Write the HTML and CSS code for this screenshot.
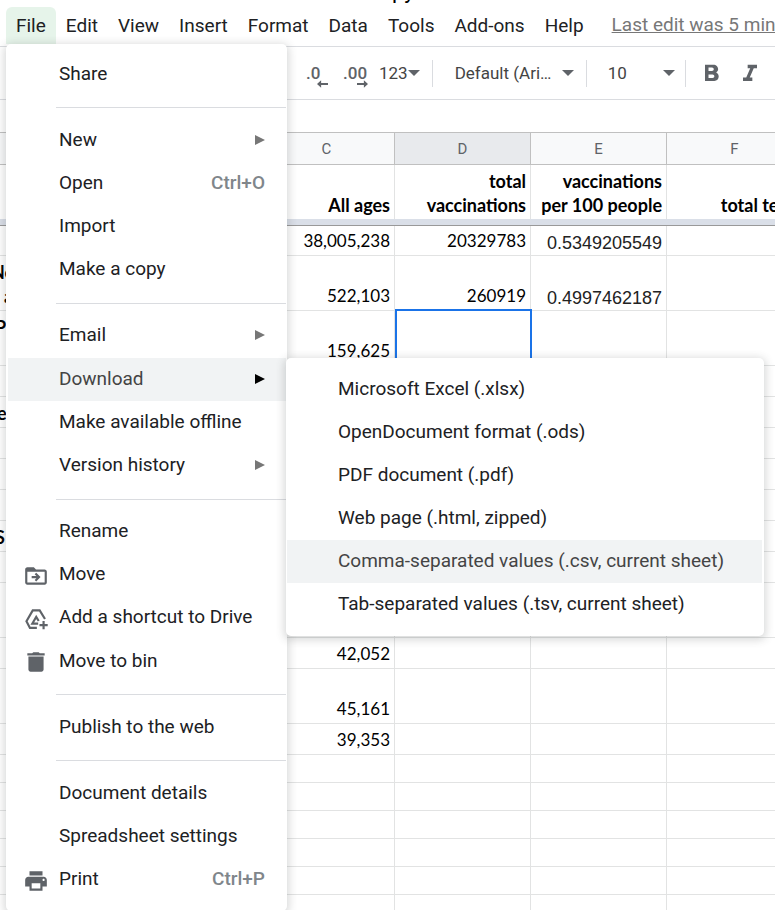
FILE: index.html
```html
<!DOCTYPE html>
<html lang="en">
<head>
<meta charset="utf-8">
<title>Spreadsheet</title>
<link rel="stylesheet" href="styles.css">
</head>
<body>
<header class="title-row"><span class="doc-title">py</span></header>
<nav class="menubar">
  <button class="menu-button open" type="button">File</button>
  <button class="menu-button" type="button">Edit</button>
  <button class="menu-button" type="button">View</button>
  <button class="menu-button" type="button">Insert</button>
  <button class="menu-button" type="button">Format</button>
  <button class="menu-button" type="button">Data</button>
  <button class="menu-button" type="button">Tools</button>
  <button class="menu-button" type="button">Add-ons</button>
  <button class="menu-button" type="button">Help</button>
  <a class="last-edit" href="#">Last edit was 5 min</a>
</nav>
<div class="toolbar">
  <button class="tool decimal" type="button">.0<svg class="arrow" viewBox="0 0 12 8"><path d="M0 4l4.500-4v3H12v2H4.500v3z"/></svg></button>
  <button class="tool decimal wide" type="button">.00<svg class="arrow" viewBox="0 0 12 8"><path d="M12 4L7.500 0v3H0v2h7.500v3z"/></svg></button>
  <button class="tool number" type="button">123<span class="caret"></span></button>
  <span class="divider"></span>
  <label class="picker family"><select aria-label="Font"><option>Default (Ari…</option></select><span class="caret"></span></label>
  <span class="divider"></span>
  <label class="picker size"><select aria-label="Font size"><option>10</option></select><span class="caret"></span></label>
  <span class="divider"></span>
  <button class="tool style" type="button" aria-label="Bold"><svg viewBox="0 0 24 24"><path d="M15.600 10.790c.970-.670 1.650-1.770 1.650-2.790 0-2.260-1.750-4-4-4H6v14h8.040c2.090 0 3.710-1.700 3.710-3.790 0-1.520-.860-2.820-2.150-3.420zM9 6.500h3c.830 0 1.500.670 1.500 1.500s-.670 1.500-1.500 1.500H9v-3zm3.500 9H9v-3h3.500c.830 0 1.500.670 1.500 1.500s-.670 1.500-1.500 1.500z"/></svg></button>
  <button class="tool style" type="button" aria-label="Italic"><svg viewBox="0 0 24 24"><path d="M10 4v3h2.210l-3.420 8H6v3h8v-3h-2.210l3.420-8H18V4z"/></svg></button>
</div>
<main class="sheet">
<table class="grid">
  <colgroup><col class="first"><col><col><col><col></colgroup>
  <thead>
    <tr class="letters"><th></th><th>C</th><th class="active">D</th><th>E</th><th>F</th></tr>
    <tr class="titles"><th></th><th>All ages</th><th>total<br>vaccinations</th><th>vaccinations<br>per 100 people</th><th>total tests</th></tr>
    <tr class="freeze"><td colspan="5"></td></tr>
  </thead>
  <tbody>
    <tr class="r30"><td></td><td>38,005,238</td><td>20329783</td><td class="plain">0.5349205549</td><td></td></tr>
    <tr class="r55"><td class="name wide-name">Ne<br>a</td><td>522,103</td><td>260919</td><td class="plain">0.4997462187</td><td></td></tr>
    <tr class="r55"><td class="name">P<br>&nbsp;</td><td>159,625</td><td class="selected"></td><td></td><td></td></tr>
    <tr class="r31"><td></td><td></td><td></td><td></td><td></td></tr>
    <tr class="r31"><td class="name e-name">e</td><td></td><td></td><td></td><td></td></tr>
    <tr class="r31"><td></td><td></td><td></td><td></td><td></td></tr>
    <tr class="r31"><td></td><td></td><td></td><td></td><td></td></tr>
    <tr class="r31"><td></td><td></td><td></td><td></td><td></td></tr>
    <tr class="r31"><td class="name">S</td><td></td><td></td><td></td><td></td></tr>
    <tr class="r31"><td></td><td></td><td></td><td></td><td></td></tr>
    <tr class="r55"><td></td><td></td><td></td><td></td><td></td></tr>
    <tr class="r31"><td></td><td>42,052</td><td></td><td></td><td></td></tr>
    <tr class="r55"><td></td><td>45,161</td><td></td><td></td><td></td></tr>
    <tr class="r31"><td></td><td>39,353</td><td></td><td></td><td></td></tr>
    <tr class="r28"><td></td><td></td><td></td><td></td><td></td></tr>
    <tr class="r28"><td></td><td></td><td></td><td></td><td></td></tr>
    <tr class="r28"><td></td><td></td><td></td><td></td><td></td></tr>
    <tr class="r28"><td></td><td></td><td></td><td></td><td></td></tr>
    <tr class="r28"><td></td><td></td><td></td><td></td><td></td></tr>
    <tr class="r28"><td></td><td></td><td></td><td></td><td></td></tr>
  </tbody>
</table>
</main>

<ul class="menu file-menu">
  <li class="row"><button class="item" type="button">Share</button></li>
  <li class="separator"></li>
  <li class="row"><button class="item" type="button">New<span class="more"></span></button></li>
  <li class="row"><button class="item" type="button">Open<kbd>Ctrl+O</kbd></button></li>
  <li class="row"><button class="item" type="button">Import</button></li>
  <li class="row"><button class="item" type="button">Make a copy</button></li>
  <li class="separator"></li>
  <li class="row"><button class="item" type="button">Email<span class="more"></span></button></li>
  <li class="row">
    <button class="item current" type="button">Download<span class="more"></span></button>
    <ul class="menu submenu">
      <li><button class="item" type="button">Microsoft Excel (.xlsx)</button></li>
      <li><button class="item" type="button">OpenDocument format (.ods)</button></li>
      <li><button class="item" type="button">PDF document (.pdf)</button></li>
      <li><button class="item" type="button">Web page (.html, zipped)</button></li>
      <li><button class="item current" type="button">Comma-separated values (.csv, current sheet)</button></li>
      <li><button class="item" type="button">Tab-separated values (.tsv, current sheet)</button></li>
    </ul>
  </li>
  <li class="row"><button class="item" type="button">Make available offline</button></li>
  <li class="row"><button class="item" type="button">Version history<span class="more"></span></button></li>
  <li class="separator"></li>
  <li class="row"><button class="item" type="button">Rename</button></li>
  <li class="row"><button class="item" type="button"><svg class="icon" viewBox="0 0 24 24"><path d="M20 6h-8l-2-2H4c-1.100 0-2 .900-2 2v12c0 1.100.900 2 2 2h16c1.100 0 2-.900 2-2V8c0-1.100-.900-2-2-2zm0 12H4V8h16v10z"/><path d="M8 12h4.400l-1.600-1.600L12.200 9l4 4-4 4-1.400-1.400 1.600-1.600H8z"/></svg>Move</button></li>
  <li class="row"><button class="item" type="button"><svg class="icon" viewBox="0 0 24 24"><path class="line" d="M20.300 12L15.400 4H9L3.200 14l3.200 6.200h6.400M14 16.200H8.600L12.200 10l2.300 3.800"/><path class="line" d="M19 13.800v7.600M15.200 17.600h7.600"/></svg>Add a shortcut to Drive</button></li>
  <li class="row"><button class="item" type="button"><svg class="icon" viewBox="0 0 24 24"><path d="M5 19c0 1.100.900 2 2 2h10c1.100 0 2-.900 2-2V7H5v12zM20 4h-4.500l-1-1h-5l-1 1H4v2h16V4z"/></svg>Move to bin</button></li>
  <li class="separator"></li>
  <li class="row"><button class="item" type="button">Publish to the web</button></li>
  <li class="separator"></li>
  <li class="row"><button class="item" type="button">Document details</button></li>
  <li class="row"><button class="item" type="button">Spreadsheet settings</button></li>
  <li class="row"><button class="item" type="button"><svg class="icon" viewBox="0 0 24 24"><path d="M19 8H5c-1.660 0-3 1.340-3 3v6h4v4h12v-4h4v-6c0-1.660-1.340-3-3-3zm-3 11H8v-5h8v5zm3-7c-.550 0-1-.450-1-1s.450-1 1-1 1 .450 1 1-.450 1-1 1zm-1-9H6v4h12V3z"/></svg>Print<kbd>Ctrl+P</kbd></button></li>
</ul>
</body>
</html>
```
FILE: styles.css
```css
* { box-sizing: border-box; }

body {
  position: relative;
  height: 100vh;
  margin: 0;
  overflow: hidden;
  background: #fff;
  color: #202124;
  font: 19px/24px Roboto, sans-serif;
}

button, select {
  margin: 0;
  padding: 0;
  border: 0;
  background: none;
  color: inherit;
  font: inherit;
  text-align: left;
  white-space: nowrap;
}

/* Title and menu bar */
.title-row {
  display: flex;
  align-items: flex-end;
  height: 3px;
  padding-left: 392px;
  overflow: hidden;
}
.doc-title { color: #000; font-size: 22px; line-height: 24px; }

.menubar {
  display: flex;
  align-items: flex-start;
  height: 44px;
  padding: 4px 0 0 6px;
  border-bottom: 1px solid #dadce0;
  white-space: nowrap;
}
.menu-button { flex: none; height: 37px; padding: 0 10px; }
.menu-button.open { border-radius: 6px 6px 0 0; background: #e6f4ea; }
.last-edit { margin-left: 18px; color: #777; line-height: 36px; }

/* Toolbar */
.toolbar {
  display: flex;
  align-items: center;
  height: 53px;
  padding-left: 306px;
  border-bottom: 1px solid #dadce0;
  color: #5f6368;
  font-size: 17px;
}
.tool { flex: none; position: relative; }
.decimal { width: 37px; font-weight: 500; }
.decimal.wide { width: 36px; }
.arrow {
  position: absolute;
  left: 11px;
  bottom: -3px;
  width: 11px;
  height: 8px;
  fill: #5f6368;
}
.wide .arrow { left: 14px; }
.number { display: flex; align-items: center; color: #444; }
.caret {
  border: 6px solid transparent;
  border-top-color: #5f6368;
  border-bottom: 0;
}
.divider { flex: none; width: 1px; height: 27px; background: #dadce0; }
.number + .divider { margin-left: 12px; }
.picker { display: flex; flex: none; align-items: center; color: #444; }
.picker select { flex: 1; min-width: 0; appearance: none; }
.family { width: 153px; padding: 0 12px 0 22px; }
.size { width: 98px; padding: 0 10px 0 21px; }
.style { width: 38px; height: 26px; padding-left: 12px; }
.style svg { display: block; width: 28px; height: 28px; fill: #5f6368; }

/* Sheet */
.sheet { margin-top: 32px; overflow: hidden; }
.grid {
  width: 803px;
  border-collapse: separate;
  border-spacing: 0;
  table-layout: fixed;
  color: #000;
  font: 17px/24px Lato, sans-serif;
}
.grid col { width: 136px; }
.grid .first { width: 259px; }
.grid th, .grid td {
  padding: 0 4px 2px;
  border: solid #e2e3e3;
  border-width: 0 1px 1px 0;
  text-align: right;
  vertical-align: bottom;
  white-space: nowrap;
}
.grid .letters th {
  height: 33px;
  padding: 0;
  border-color: #c0c0c0;
  border-top-width: 1px;
  background: #f8f9fa;
  color: #5f6368;
  font: 15px/24px Roboto, sans-serif;
  text-align: center;
  vertical-align: middle;
}
.grid .letters .active { background: #e8eaed; }
.grid .titles th { height: 54px; border-bottom: 0; font-weight: 700; font-size: 18px; }
.grid .titles th:last-child { padding-right: 1px; }
.grid .freeze td {
  height: 7px;
  padding: 0;
  border-bottom-color: #999;
  background: #dadfe8;
  line-height: 1px;
}
.r28 { height: 28px; }
.r30 { height: 30px; }
.r31 { height: 31px; }
.r55 { height: 55px; }
.grid .plain { padding-bottom: 0; color: #222; font: 18px/24px "Liberation Sans", sans-serif; }
.grid .name { padding-left: 0; font-weight: 700; font-size: 18px; text-align: left; text-indent: -5px; }
.grid .wide-name { padding-left: 4px; text-indent: -13px; }
.grid .e-name { text-indent: -3px; }
.selected { position: relative; }
.selected::after {
  content: "";
  position: absolute;
  inset: -2px -2px -2px 0;
  border: 2px solid #1a73e8;
}

/* Menus */
.menu {
  position: absolute;
  margin: 0;
  list-style: none;
  border-radius: 5px;
  background: #fff;
  box-shadow: 0 2px 8px 2px rgba(60, 64, 67, .2);
}
.file-menu {
  top: 44px;
  bottom: -1px;
  left: 6px;
  display: flex;
  flex-direction: column;
  width: 281px;
  padding: 9px 1px 9px 2px;
}
.row { position: relative; flex: 1 0 43px; }
.separator {
  flex: none;
  height: 1px;
  margin: 11px 0 11px 48px;
  background: #dadce0;
}
.item {
  position: relative;
  display: flex;
  align-items: center;
  justify-content: space-between;
  width: 100%;
  height: 43px;
  padding: 0 21px 2px 51px;
}
.item.current { background: #f1f3f4; color: #444; }
.icon {
  position: absolute;
  left: 15px;
  top: 9px;
  width: 26px;
  height: 26px;
  fill: #5f6368;
}
.icon .line { fill: none; stroke: #5f6368; stroke-width: 2; }
.more {
  border: 5px solid transparent;
  border-left: 10px solid #777;
  border-right: 0;
}
.current .more { border-left-color: #000; }
kbd { color: #80868b; font: 500 19px/24px Roboto, sans-serif; }
.submenu { top: 0; left: 278px; width: 478px; padding: 10px 2px 10px 1px; }
```
